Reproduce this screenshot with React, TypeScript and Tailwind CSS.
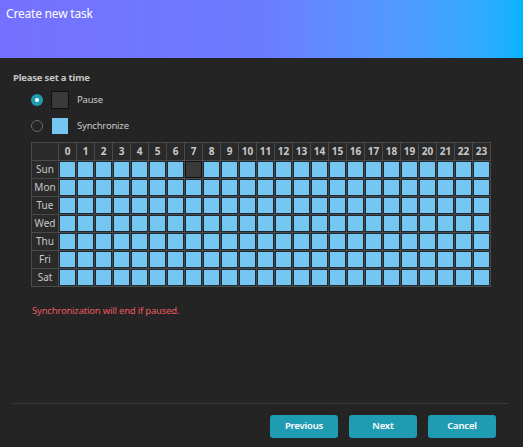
import { useState } from "react";

const HOURS = Array.from({ length: 24 }, (_, i) => i);
const DAYS = ["Sun", "Mon", "Tue", "Wed", "Thu", "Fri", "Sat"];

type Mode = "pause" | "sync";

function Radio({ checked }: { checked: boolean }) {
  return checked ? (
    <span className="flex h-[12px] w-[12px] items-center justify-center rounded-full bg-[#1f9cb1]">
      <span className="h-[4px] w-[4px] rounded-full bg-white" />
    </span>
  ) : (
    <span className="h-[12px] w-[12px] rounded-full border-[1.5px] border-[#6a6a6a]" />
  );
}

export default function App() {
  const [mode, setMode] = useState<Mode>("pause");
  // paused slots, keyed "day-hour"
  const [paused, setPaused] = useState<Record<string, boolean>>({ "0-7": true });

  const toggle = (d: number, h: number) => {
    const key = `${d}-${h}`;
    setPaused((prev) => ({ ...prev, [key]: mode === "pause" }));
  };

  return (
    <div
      className="flex h-[447px] w-full flex-col bg-[#242424] text-[#c8c8c8]"
      style={{ fontFamily: '"Noto Sans", "Open Sans", sans-serif' }}
    >
      <div className="h-[58px] shrink-0 bg-gradient-to-r from-[#7570ff] via-[#6c7cff] to-[#00b3ff] px-[6px] pt-[5px] text-[12px] leading-[18px] tracking-[-0.2px] text-white">
        Create new task
      </div>

      <div className="pl-[13px] pt-[13px]">
        <div className="text-[9.5px] font-bold leading-[14px] tracking-[-0.2px] text-[#c4c4c4]">
          Please set a time
        </div>

        <div className="ml-[18px] mt-[6px] flex flex-col gap-[8px]">
          <button className="flex h-[18px] items-center text-left" onClick={() => setMode("pause")}>
            <Radio checked={mode === "pause"} />
            <span className="ml-[8px] h-[18px] w-[18px] border border-[#111] bg-[#3a3a3a]" />
            <span className="ml-[8px] text-[9.5px] tracking-[-0.2px] text-[#c8c8c8]">Pause</span>
          </button>
          <button className="flex h-[18px] items-center text-left" onClick={() => setMode("sync")}>
            <Radio checked={mode === "sync"} />
            <span className="ml-[9px] h-[16px] w-[16px] bg-[#75c7f2]" />
            <span className="ml-[9px] text-[9.5px] tracking-[-0.2px] text-[#c8c8c8]">Synchronize</span>
          </button>
        </div>

        <div className="ml-[18px] mt-[7px] grid w-[460px] grid-cols-[26px_repeat(24,17px)] gap-px border border-[#4a4a4a] bg-[#4a4a4a]">
          <div className="h-[17px] bg-[#2a2a2a]" />
          {HOURS.map((h) => (
            <div
              key={h}
              className="flex h-[17px] items-center justify-center bg-[#2a2a2a] text-[10px] font-bold text-[#c8c8c8]"
            >
              {h}
            </div>
          ))}
          {DAYS.map((day, d) => (
            <div key={day} className="contents">
              <div className="flex h-[17px] items-center justify-center bg-[#2a2a2a] text-[10px] text-[#c8c8c8]">
                {day}
              </div>
              {HOURS.map((h) => {
                const p = paused[`${d}-${h}`];
                return (
                  <div
                    key={h}
                    onClick={() => toggle(d, h)}
                    className={
                      p
                        ? "h-[17px] border border-[#111] bg-[#3a3a3a]"
                        : "h-[17px] border border-[#1e2a33] bg-[#75c7f2]"
                    }
                  />
                );
              })}
            </div>
          ))}
        </div>

        <div className="ml-[19px] mt-[17px] text-[9.5px] leading-[14px] tracking-[-0.2px] text-[#ea5a5f]">
          Synchronization will end if paused.
        </div>
      </div>

      <div className="mt-auto px-[13px] pb-[9px]">
        <div className="mr-[2px] h-px bg-[#3a3a3a]" />
        <div className="mt-[11px] flex justify-end gap-[11px] pr-[14px]">
          {["Previous", "Next", "Cancel"].map((label) => (
            <button
              key={label}
              className="h-[23px] w-[68px] rounded-[3px] bg-[#1f9cb1] text-[9.5px] font-semibold tracking-[-0.2px] text-white"
            >
              {label}
            </button>
          ))}
        </div>
      </div>
    </div>
  );
}
